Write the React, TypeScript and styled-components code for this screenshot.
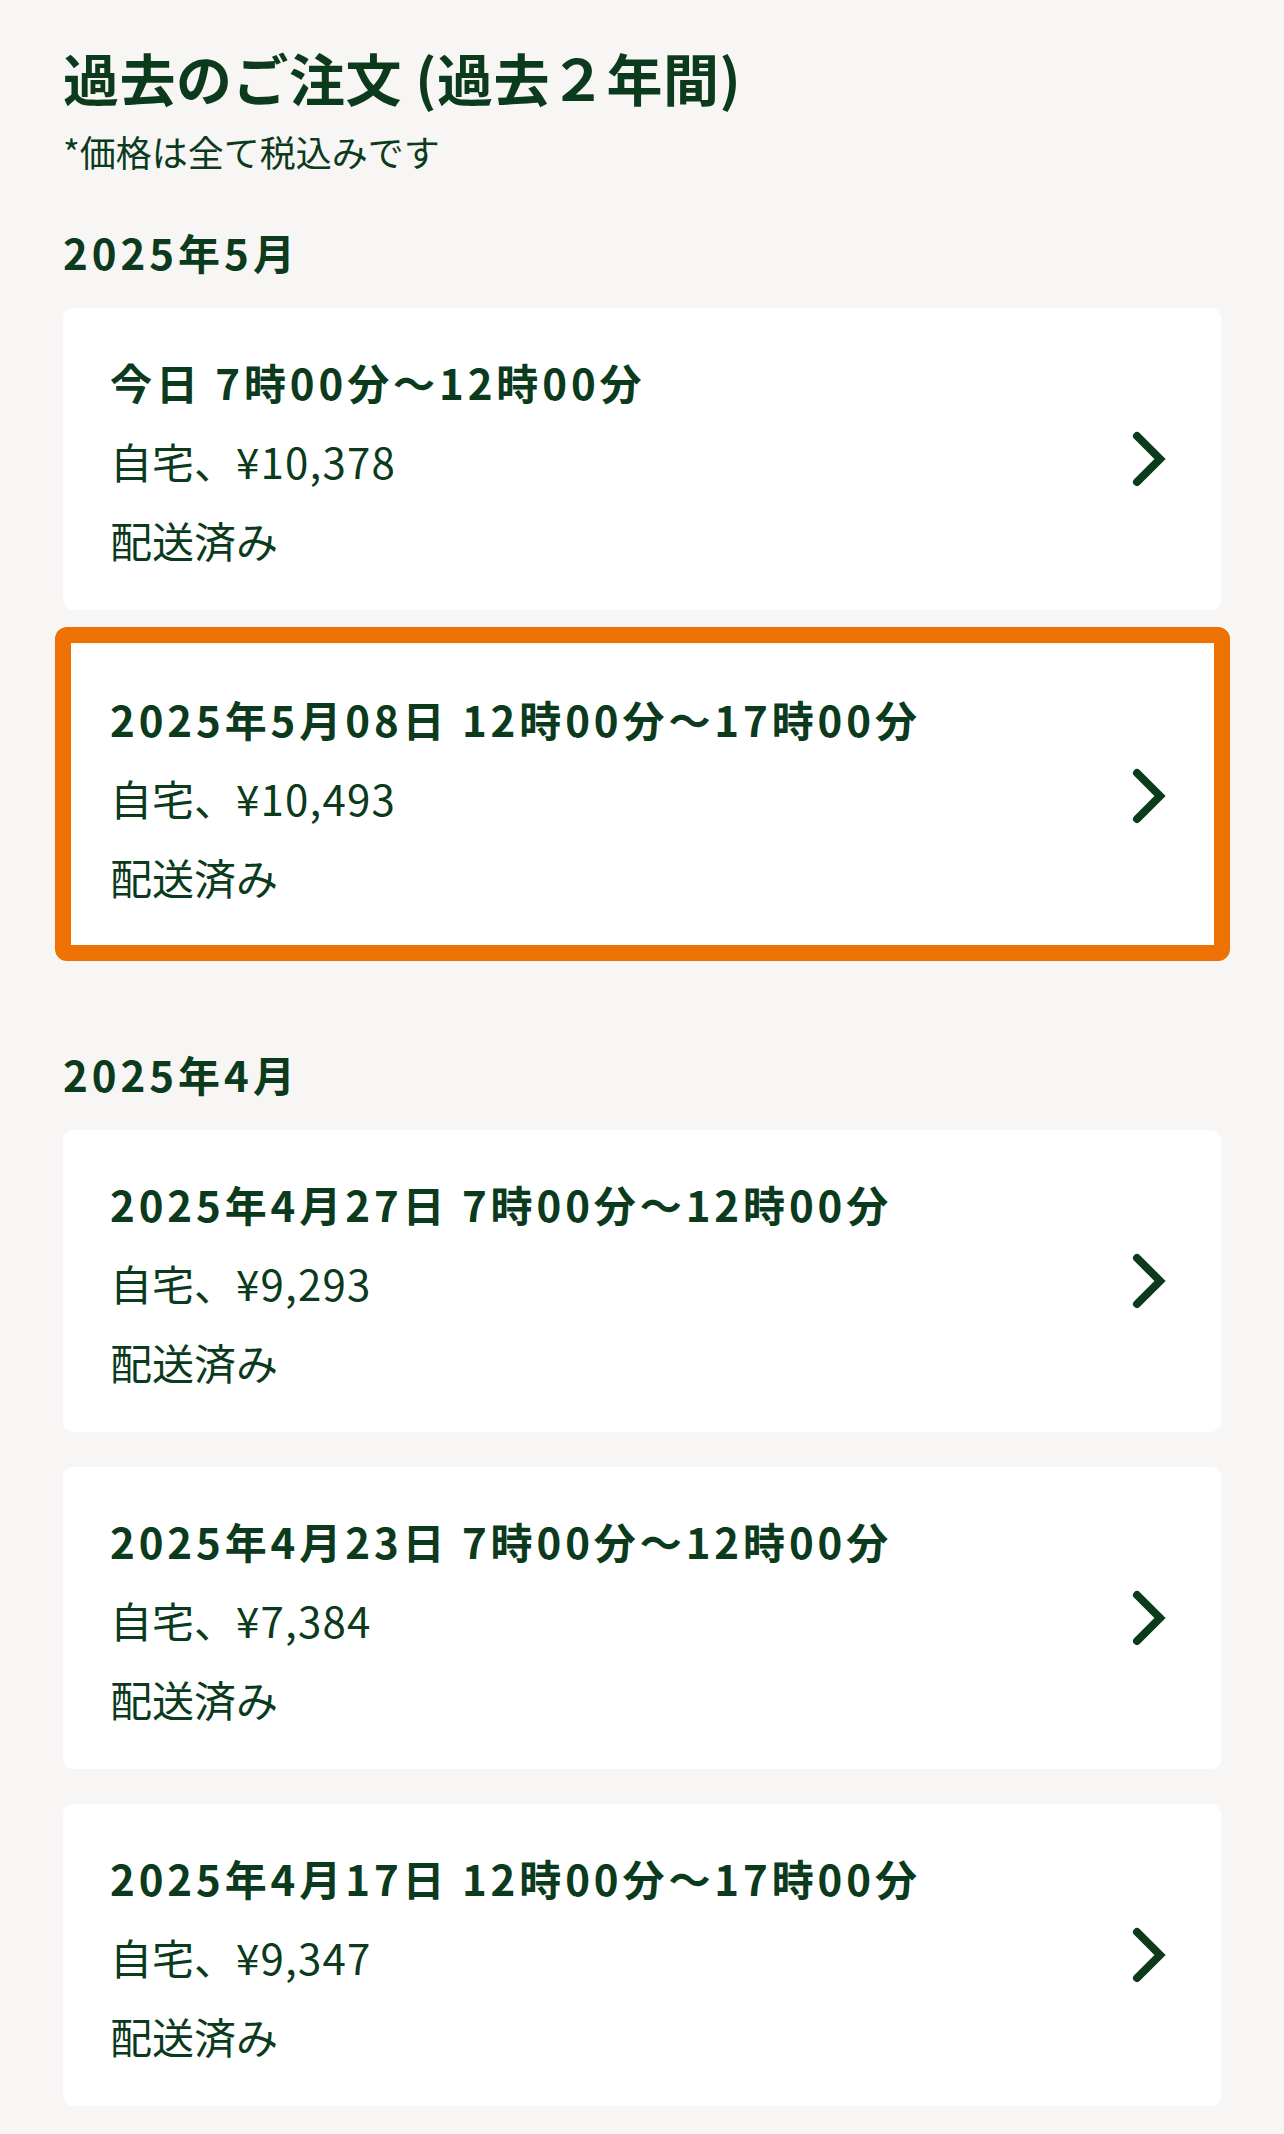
import React from "react";
import styled, { createGlobalStyle } from "styled-components";

const GlobalStyle = createGlobalStyle`
  html, body {
    margin: 0;
    padding: 0;
    background: #f7f6f4;
  }
  body {
    font-family: "Noto Sans CJK JP", "Noto Sans", sans-serif;
    color: #0b3a1c;
    -webkit-font-smoothing: antialiased;
  }
  * { box-sizing: border-box; }
`;

const Page = styled.main`
  padding: 41px 63px 29px;
  display: flex;
  flex-direction: column;
`;

const PageHeader = styled.header`
  display: flex;
  flex-direction: column;
  gap: 13px;
  margin-bottom: 48px;
`;

const Title = styled.h1`
  margin: 0;
  font-size: 56px;
  line-height: 72px;
  font-weight: 700;
  letter-spacing: 0.5px;
  color: #0b3a1c;
`;

const Note = styled.p`
  margin: 0;
  font-size: 36px;
  line-height: 50px;
  font-weight: 400;
  color: #0b3a1c;
`;

const Sections = styled.div`
  display: flex;
  flex-direction: column;
  gap: 99px;
`;

const Section = styled.section`
  display: flex;
  flex-direction: column;
  gap: 28px;
`;

const MonthLabel = styled.h2`
  margin: 0;
  font-size: 42px;
  line-height: 56px;
  font-weight: 700;
  letter-spacing: 4px;
  color: #0b3a1c;
`;

const CardList = styled.div`
  display: flex;
  flex-direction: column;
  gap: 35px;
`;

const Card = styled.a<{ $highlighted?: boolean }>`
  position: relative;
  display: flex;
  align-items: center;
  justify-content: space-between;
  height: 302px;
  padding: 0 51px 0 47px;
  background: #ffffff;
  border-radius: 10px;
  color: inherit;
  text-decoration: none;

  &::after {
    content: "";
    display: ${(p) => (p.$highlighted ? "block" : "none")};
    position: absolute;
    top: -18px;
    bottom: -14px;
    left: -8px;
    right: -9px;
    border: 16px solid #ee7203;
    border-radius: 12px;
    pointer-events: none;
  }
`;

const CardBody = styled.div`
  display: flex;
  flex-direction: column;
  padding-top: 2px;
`;

const SlotLine = styled.div`
  font-size: 42px;
  line-height: 79px;
  font-weight: 700;
  letter-spacing: 3.9px;
  white-space: nowrap;
`;

const InfoLine = styled.div`
  font-size: 42px;
  line-height: 79px;
  font-weight: 400;
  white-space: nowrap;
`;

const Price = styled.span`
  letter-spacing: 1.2px;
`;

const Chevron = styled.svg`
  flex: none;
  width: 40px;
  height: 56px;
  color: #0b3a1c;
`;

type Order = {
  slot: string;
  place: string;
  price: string;
  status: string;
  highlighted?: boolean;
};

type MonthGroup = {
  label: string;
  orders: Order[];
};

const groups: MonthGroup[] = [
  {
    label: "2025年5月",
    orders: [
      {
        slot: "今日 7時00分〜12時00分",
        place: "自宅",
        price: "¥10,378",
        status: "配送済み",
      },
      {
        slot: "2025年5月08日 12時00分〜17時00分",
        place: "自宅",
        price: "¥10,493",
        status: "配送済み",
        highlighted: true,
      },
    ],
  },
  {
    label: "2025年4月",
    orders: [
      {
        slot: "2025年4月27日 7時00分〜12時00分",
        place: "自宅",
        price: "¥9,293",
        status: "配送済み",
      },
      {
        slot: "2025年4月23日 7時00分〜12時00分",
        place: "自宅",
        price: "¥7,384",
        status: "配送済み",
      },
      {
        slot: "2025年4月17日 12時00分〜17時00分",
        place: "自宅",
        price: "¥9,347",
        status: "配送済み",
      },
    ],
  },
];

function ChevronRight() {
  return (
    <Chevron viewBox="0 0 40 56" aria-hidden="true">
      <polyline
        points="7,5 30,28 7,51"
        fill="none"
        stroke="currentColor"
        strokeWidth={8}
        strokeLinecap="round"
        strokeLinejoin="miter"
      />
    </Chevron>
  );
}

function OrderCard({ order }: { order: Order }) {
  return (
    <Card href="#" $highlighted={order.highlighted}>
      <CardBody>
        <SlotLine>{order.slot}</SlotLine>
        <InfoLine>
          {order.place}、<Price>{order.price}</Price>
        </InfoLine>
        <InfoLine>{order.status}</InfoLine>
      </CardBody>
      <ChevronRight />
    </Card>
  );
}

export default function App() {
  return (
    <>
      <GlobalStyle />
      <Page>
        <PageHeader>
          <Title>過去のご注文 (過去２年間)</Title>
          <Note>*価格は全て税込みです</Note>
        </PageHeader>
        <Sections>
          {groups.map((g) => (
            <Section key={g.label}>
              <MonthLabel>{g.label}</MonthLabel>
              <CardList>
                {g.orders.map((o) => (
                  <OrderCard key={o.slot} order={o} />
                ))}
              </CardList>
            </Section>
          ))}
        </Sections>
      </Page>
    </>
  );
}
